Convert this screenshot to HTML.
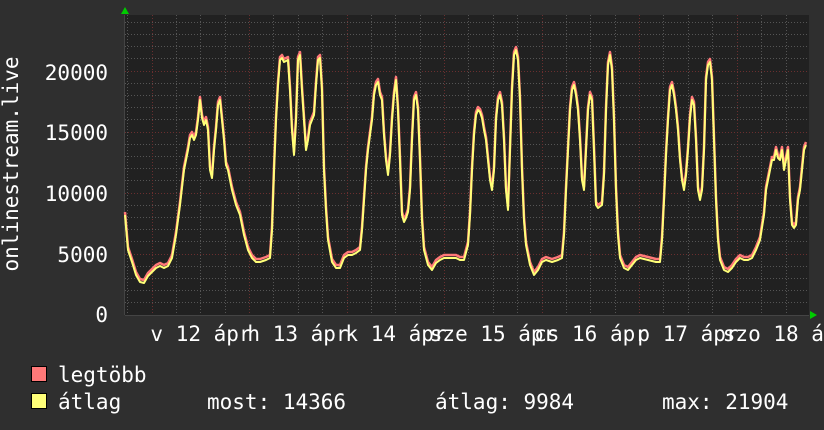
<!DOCTYPE html>
<html><head><meta charset="utf-8"><style>
html,body{margin:0;padding:0;background:#2f2f2f;}
svg{display:block}
text{font-family:"DejaVu Sans Mono","Liberation Mono",monospace;fill:#fff;font-size:21px}
</style></head><body>
<svg width="824" height="430" viewBox="0 0 824 430" xmlns="http://www.w3.org/2000/svg">
<rect width="824" height="430" fill="#2f2f2f"/>
<rect x="125" y="15" width="684" height="300" fill="#212121"/>
<g stroke="#555" stroke-width="1" stroke-dasharray="1,2">
<path d="M125 302.5H809M125 290.5H809M125 278.5H809M125 266.5H809M125 241.5H809M125 229.5H809M125 217.5H809M125 205.5H809M125 180.5H809M125 168.5H809M125 156.5H809M125 144.5H809M125 119.5H809M125 107.5H809M125 95.5H809M125 83.5H809M125 58.5H809M125 46.5H809M125 34.5H809M125 22.5H809"/>
<path d="M127.5 15V315M176.5 15V315M200.5 15V315M225.5 15V315M273.5 15V315M298.5 15V315M322.5 15V315M371.5 15V315M395.5 15V315M420.5 15V315M468.5 15V315M493.5 15V315M517.5 15V315M566.5 15V315M590.5 15V315M615.5 15V315M663.5 15V315M688.5 15V315M712.5 15V315M761.5 15V315M786.5 15V315"/>
</g>
<g stroke="#6a2f2f" stroke-width="1" stroke-dasharray="1,2">
<path d="M125 254.5H809M125 193.5H809M125 132.5H809M125 71.5H809"/>
<path d="M152.5 15V315M249.5 15V315M347.5 15V315M444.5 15V315M542.5 15V315M639.5 15V315M737.5 15V315"/>
</g>
<path d="M125 315.5H809M124.5 15V315" stroke="#444" stroke-width="1"/>
<polygon points="121,14 129,14 125,7" fill="#0c0"/>
<polygon points="810,311 810,319 817,315" fill="#0c0"/>
<defs><polyline id="d" fill="none" stroke-linejoin="round" points="125,215 128,250 132,262 136,275 140,282 144,283 148,276 152,272 156,268 160,266 164,268 168,266 172,258 176,235 180,205 184,170 188,150 190,138 192,135 194,140 196,135 198,120 200,100 202,118 204,125 206,120 208,130 210,170 212,178 214,150 216,130 218,105 220,100 222,120 224,140 226,165 228,170 232,190 236,205 240,215 244,235 248,250 252,258 256,262 260,262 266,260 270,258 272,230 274,170 276,120 278,85 280,60 282,58 284,62 288,60 290,90 292,130 294,155 296,120 298,60 300,55 302,90 304,120 306,150 308,140 310,125 312,120 314,115 316,85 318,60 320,58 322,90 324,170 326,210 328,240 332,262 336,268 340,268 344,258 348,255 352,255 356,253 360,250 362,230 364,200 366,170 368,150 370,135 372,120 374,95 376,85 378,82 380,95 382,100 384,135 386,160 388,175 390,155 392,120 394,95 396,80 398,110 400,160 402,215 404,222 406,218 408,212 410,190 412,140 414,100 416,95 418,110 420,160 422,220 424,250 428,265 432,270 436,263 440,260 444,258 450,258 456,258 460,260 464,260 468,245 470,215 472,170 474,135 476,115 478,110 480,112 482,118 484,130 486,140 488,160 490,180 492,190 494,170 496,120 498,100 500,95 502,105 504,140 506,190 508,210 510,150 512,90 514,55 516,50 518,60 520,100 522,170 524,220 526,245 530,265 534,275 538,270 542,262 546,260 552,262 558,260 562,258 564,235 566,190 568,150 570,110 572,90 574,85 576,95 578,110 580,140 582,180 584,190 586,150 588,110 590,95 592,100 594,150 596,205 598,208 602,205 604,175 606,110 608,65 610,55 612,70 614,120 616,190 618,235 620,258 624,268 628,270 632,265 636,260 640,258 648,260 656,262 660,262 662,240 664,200 666,155 668,120 670,90 672,85 674,95 676,110 678,130 680,160 682,180 684,190 686,175 688,150 690,118 692,100 694,105 696,140 698,190 700,200 702,190 704,150 706,80 708,65 710,62 712,80 714,140 716,200 718,240 720,260 724,270 728,272 732,268 736,262 740,258 744,260 748,260 752,258 756,250 760,240 764,215 766,190 770,170 772,160 774,160 776,150 778,158 780,160 782,150 784,170 786,160 788,150 790,200 792,225 794,228 796,225 798,200 800,190 802,170 804,150 806,145"/></defs>
<use href="#d" stroke="#ff7878" stroke-width="2.5" transform="translate(0,-3)"/>
<use href="#d" stroke="#ffff78" stroke-width="2"/>
<g text-anchor="end">
<text x="108" y="322">0</text>
<text x="108" y="262">5000</text>
<text x="108" y="201">10000</text>
<text x="108" y="140">15000</text>
<text x="108" y="80">20000</text>
</g>
<text transform="translate(18,164) rotate(-90)" text-anchor="middle">onlinestream.live</text>
<g text-anchor="middle">
<text x="201" y="341">v 12 ápr</text>
<text x="298" y="341">h 13 ápr</text>
<text x="396" y="341">k 14 ápr</text>
<text x="493" y="341">sze 15 ápr</text>
<text x="591" y="341">cs 16 ápr</text>
<text x="688" y="341">p 17 ápr</text>
<text x="786" y="341">szo 18 ápr</text>
</g>
<rect x="31.5" y="366.5" width="15" height="15" fill="#ff7878" stroke="#000"/>
<rect x="31.5" y="393.5" width="15" height="15" fill="#ffff78" stroke="#000"/>
<text x="58" y="382">legtöbb</text>
<text x="58" y="409">átlag</text>
<text x="207" y="409">most: 14366</text>
<text x="435" y="409">átlag: 9984</text>
<text x="662" y="409">max: 21904</text>
</svg>
</body></html>
